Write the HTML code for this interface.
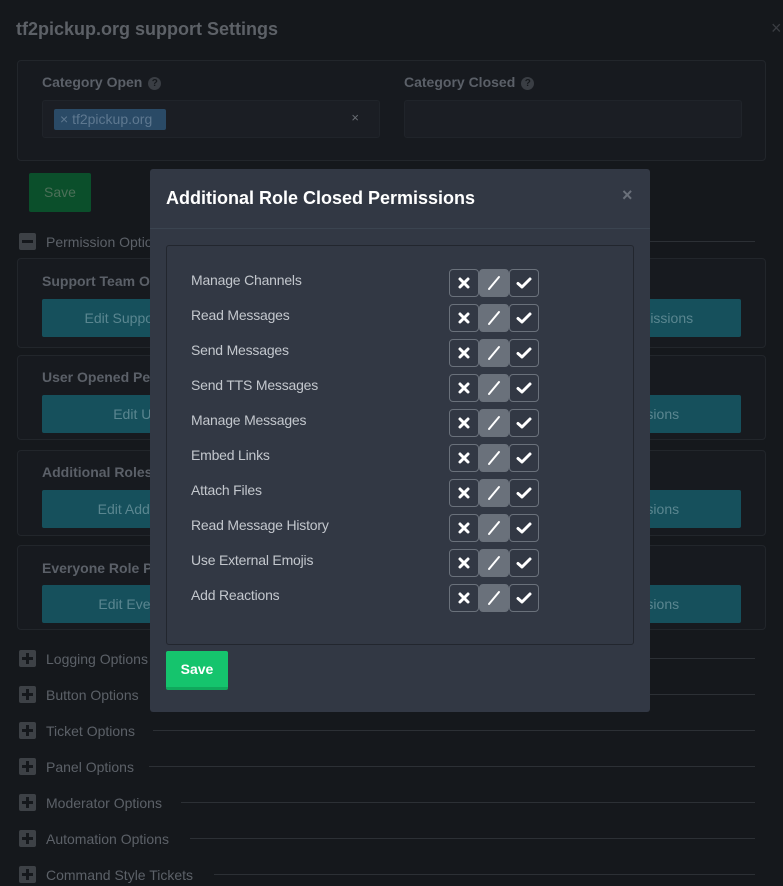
<!DOCTYPE html>
<html><head><style>
*{box-sizing:border-box;margin:0;padding:0}
body{width:783px;height:881px;overflow:hidden;background:#15181c;font-family:"Liberation Sans",sans-serif;position:relative;color:#5a5f66}
.a{position:absolute}
.card{position:absolute;left:17px;width:749px;border:1px solid #22262b;border-radius:4px;background:#171a1f}
.lbl{position:absolute;font-weight:bold;font-size:14px;color:#5b6068}
.q{display:inline-block;width:13px;height:13px;border-radius:50%;background:#3a3e44;color:#15181c;font-size:10px;text-align:center;line-height:13px;margin-left:6px;vertical-align:1px}
.tb{position:absolute;height:38px;background:#16505c;border-radius:2px;color:#5a8690;font-size:14px;line-height:38px;text-align:center}
.sec{position:absolute;left:19px;font-size:14px;color:#5c6168;height:20px;line-height:18px}
.sec i{display:inline-block;width:17px;height:17px;background:#3d4146;border-radius:2px;vertical-align:-3px;margin-right:10px;position:relative}
.sec i:before{content:"";position:absolute;left:3px;top:7px;width:11px;height:3px;background:#15181c}
.sec i.p:after{content:"";position:absolute;left:7px;top:3px;width:3px;height:11px;background:#15181c}
.ln{position:absolute;height:1px;background:#2c3035;right:28px}
.modal{position:absolute;left:150px;top:169px;width:500px;height:543px;background:#323844;border-radius:3px}
.row{position:absolute;left:24px;font-size:14px;color:#c3c7cd;letter-spacing:-0.2px}
.tg{position:absolute;left:299px;width:90px;height:28px}
.tg div{position:absolute;top:0;width:30px;height:28px;border:1px solid #6a717b;border-radius:4px}
.tg svg{position:absolute;left:0;top:0}
</style></head><body>
<div class="a" style="left:16px;top:19px;font-size:18px;font-weight:bold;color:#5d6167">tf2pickup.org support Settings</div>
<div class="a" style="left:771px;top:18px;font-size:18px;color:#3a3d42">×</div>
<div class="card" style="top:60px;height:101px">
 <div class="lbl" style="left:24px;top:13px">Category Open<span class="q">?</span></div>
 <div class="a" style="left:24px;top:39px;width:338px;height:38px;background:#1b1e24;border:1px solid #20242a;border-radius:3px">
  <div class="a" style="left:11px;top:8px;width:112px;height:21px;background:#2a4a66;border-radius:2px;color:#5e7890;font-size:14px;line-height:21px;padding-left:6px">× tf2pickup.org</div>
  <div class="a" style="right:20px;top:9px;color:#6a6e74;font-size:13px">×</div>
 </div>
 <div class="lbl" style="left:386px;top:13px">Category Closed<span class="q">?</span></div>
 <div class="a" style="left:386px;top:39px;width:338px;height:38px;background:#1b1e24;border:1px solid #20242a;border-radius:3px"></div>
</div>
<div class="a" style="left:29px;top:173px;width:62px;height:39px;background:#0b4f2b;border-radius:2px;color:#4c7058;font-size:14px;line-height:39px;text-align:center">Save</div>
<div class="sec" style="top:233px"><i></i>Permission Options</div><div class="ln" style="left:180px;top:241px"></div>
<div class="card" style="top:258px;height:90px"><div class="lbl" style="left:24px;top:14px">Support Team Options</div></div>
<div class="tb" style="left:42px;top:299px;width:200px">Edit Support Team</div><div class="tb" style="left:541px;top:299px;width:200px">Edit Permissions</div>
<div class="card" style="top:355px;height:85px"><div class="lbl" style="left:24px;top:13px">User Opened Permissions</div></div>
<div class="tb" style="left:42px;top:395px;width:200px">Edit User</div><div class="tb" style="left:541px;top:395px;width:200px">Permissions</div>
<div class="card" style="top:450px;height:86px"><div class="lbl" style="left:24px;top:13px">Additional Roles</div></div>
<div class="tb" style="left:42px;top:490px;width:200px">Edit Additional</div><div class="tb" style="left:541px;top:490px;width:200px">Permissions</div>
<div class="card" style="top:545px;height:85px"><div class="lbl" style="left:24px;top:14px">Everyone Role Permissions</div></div>
<div class="tb" style="left:42px;top:585px;width:200px">Edit Everyone</div><div class="tb" style="left:541px;top:585px;width:200px">Permissions</div>
<div class="sec" style="top:650px"><i class="p"></i>Logging Options</div><div class="ln" style="left:150px;top:658px"></div>
<div class="sec" style="top:686px"><i class="p"></i>Button Options</div><div class="ln" style="left:150px;top:694px"></div>
<div class="sec" style="top:722px"><i class="p"></i>Ticket Options</div><div class="ln" style="left:153px;top:730px"></div>
<div class="sec" style="top:758px"><i class="p"></i>Panel Options</div><div class="ln" style="left:149px;top:766px"></div>
<div class="sec" style="top:794px"><i class="p"></i>Moderator Options</div><div class="ln" style="left:181px;top:802px"></div>
<div class="sec" style="top:830px"><i class="p"></i>Automation Options</div><div class="ln" style="left:190px;top:838px"></div>
<div class="sec" style="top:866px"><i class="p"></i>Command Style Tickets</div><div class="ln" style="left:214px;top:874px"></div>

<div class="modal">
 <div class="a" style="left:16px;top:19px;font-size:18px;font-weight:bold;color:#fff">Additional Role Closed Permissions</div>
 <div class="a" style="left:472px;top:16px;font-size:18px;color:#6a707a;font-weight:bold">×</div>
 <div class="a" style="left:0;top:59px;width:500px;height:1px;background:#3b4450"></div>
 <div class="a" style="left:16px;top:76px;width:468px;height:400px;border:1px solid #22262e;border-radius:3px">
  <div class="row" style="top:26px">Manage Channels</div>
  <div class="row" style="top:61px">Read Messages</div>
  <div class="row" style="top:96px">Send Messages</div>
  <div class="row" style="top:131px">Send TTS Messages</div>
  <div class="row" style="top:166px">Manage Messages</div>
  <div class="row" style="top:201px">Embed Links</div>
  <div class="row" style="top:236px">Attach Files</div>
  <div class="row" style="top:271px">Read Message History</div>
  <div class="row" style="top:306px">Use External Emojis</div>
  <div class="row" style="top:341px">Add Reactions</div>
 </div>
 <div id="tgs"></div>
 <div class="a" style="left:16px;top:482px;width:62px;height:39px;background:#15c46d;border-bottom:3px solid #10a85c;border-radius:2px;color:#fff;font-size:14px;font-weight:bold;line-height:37px;text-align:center">Save</div>
</div>
<script>
var h='';for(var i=0;i<10;i++){var t=100+i*35;h+='<div class="tg" style="top:'+t+'px"><div style="left:0"><svg width="28" height="26"><path d="M10 9l8 8M18 9l-8 8" stroke="#fff" stroke-width="3" stroke-linecap="round"/></svg></div><div style="left:30px;background:#6a717b;border-color:#6a717b"><svg width="28" height="26"><path d="M9 19l10-12" stroke="#fff" stroke-width="2" stroke-linecap="round"/></svg></div><div style="left:60px"><svg width="28" height="26"><path d="M8 13.5l4 3.5l8-8" stroke="#fff" stroke-width="3" fill="none" stroke-linecap="round" stroke-linejoin="round"/></svg></div></div>';}
document.getElementById('tgs').innerHTML=h;
</script>
</body></html>
